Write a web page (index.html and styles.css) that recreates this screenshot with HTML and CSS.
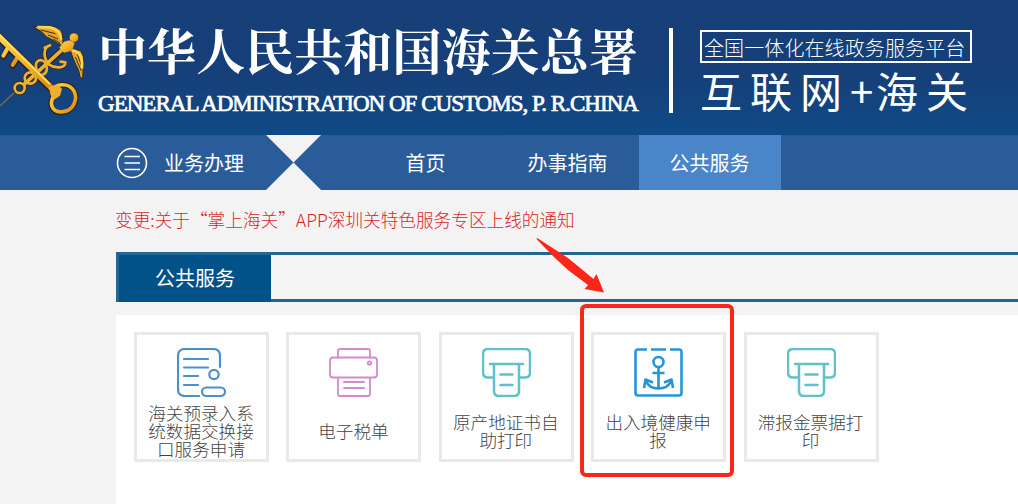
FILE: index.html
```
<!DOCTYPE html>
<html lang="zh-CN">
<head>
    <meta charset="UTF-8">
    <meta name="viewport" content="width=device-width, initial-scale=1.0">
    <title>中华人民共和国海关总署</title>
    <link rel="stylesheet" href="styles.css">
</head>
<body>
    <header class="header">
        <svg class="emblem" viewBox="0 0 300 330">
            <defs>
                <linearGradient id="gold" x1="0" y1="0" x2="1" y2="1">
                    <stop offset="0" stop-color="#ffd34a"/>
                    <stop offset="0.5" stop-color="#f4b52a"/>
                    <stop offset="1" stop-color="#d98a12"/>
                </linearGradient>
            </defs>
            <!-- dark edge under the gold -->
            <g fill="none" stroke="#2b2417" stroke-linecap="round">
                <path d="M-8 62L156 222" stroke-width="25"/>
                <path d="M160 228C166 204 208 202 223 228C235 254 220 288 190 292C158 296 144 272 160 244Z" stroke-width="16"/>
                <path d="M38 152L52 132M10 124L22 106" stroke-width="18"/>
                <path d="M70 208L204 90" stroke-width="18"/>
            </g>
            <path d="M0 273L46 230" fill="none" stroke="#8c6440" stroke-width="4"/>
            <g fill="none" stroke="#3a2a10" stroke-width="13">
                <circle cx="59" cy="219" r="15"/>
                <circle cx="91" cy="189" r="17"/>
                <path d="M110 165C100 134 128 126 138 148M146 148C128 126 130 96 150 91M146 148C166 162 198 160 196 142"/>
            </g>
            <g fill="none" stroke="#eab133" stroke-width="8" stroke-linecap="round">
                <circle cx="59" cy="219" r="15"/>
                <circle cx="91" cy="189" r="17"/>
                <path d="M110 165C100 134 128 126 138 148C144 164 140 176 124 180"/>
                <path d="M146 148C128 126 130 96 150 91M134 98L150 91M146 148C166 162 198 160 196 142M196 142L182 140"/>
                <path d="M72 208L200 92" stroke-width="11"/>
            </g>
            <!-- wings -->
            <g fill="#e0a32c" stroke="#33280f" stroke-width="3">
                <path d="M100 35L150 33C176 36 188 48 187 62L190 94L172 84L156 74L140 66L124 50Z"/>
                <path d="M210 104L240 106C250 118 252 128 250 150L248 192L240 186L236 166L228 150L220 132Z"/>
            </g>
            <path d="M122 45L166 56M144 60L174 72M160 72L180 84M226 126L244 168M232 118L247 158M240 118L247 140" stroke="#3c341f" stroke-width="3"/>
            <path d="M112 36L150 37C172 42 181 54 184 74M216 106C242 110 248 128 246 160" fill="none" stroke="#ffd251" stroke-width="8"/>
            <circle cx="222" cy="68" r="14" fill="url(#gold)" stroke="#33280f" stroke-width="2"/>
            <path d="M208 76L224 84L216 107L192 113L178 98L192 80Z" fill="url(#gold)"/>
            <!-- key -->
            <g fill="none" stroke="url(#gold)" stroke-linecap="round">
                <path d="M38 150L52 128M10 122L22 101" stroke-width="12"/>
                <path d="M-8 60L156 220" stroke-width="18"/>
                <path d="M158 228C166 204 206 202 222 228C234 254 220 286 190 290C160 294 146 272 160 244Z" stroke-width="11"/>
            </g>
            <path d="M146 216L172 208L186 222L180 242L162 254L152 240Z" fill="#edaf2c"/>
            <path d="M-2 60L150 208" stroke="#ffe06a" stroke-width="5"/>
        </svg>
        <div class="org">
            <div class="org-cn">中华人民共和国海关总署</div>
            <div class="org-en">GENERAL ADMINISTRATION OF CUSTOMS, P. R.CHINA</div>
        </div>
        <div class="line"></div>
        <div class="platform">
            <div class="platform-box">全国一体化在线政务服务平台</div>
            <div class="platform-name">互联网<span>+</span>海关</div>
        </div>
    </header>

    <nav class="nav">
        <div class="business">
            <svg class="menu-icon" viewBox="0 0 32 32">
                <circle cx="16" cy="16" r="14.5"/>
                <path d="M8.5 9.500H24M8.500 16H24M8.500 22.500H24"/>
            </svg>
            业务办理
        </div>
        <svg class="hourglass" viewBox="0 0 55 55">
            <path d="M0 0H55L0 55H55Z"/>
        </svg>
        <div class="menu">
            <a class="menu-item">首页</a>
            <a class="menu-item">办事指南</a>
            <a class="menu-item active">公共服务</a>
        </div>
    </nav>

    <main class="main">
        <p class="notice">变更:关于“掌上海关”APP深圳关特色服务专区上线的通知</p>
        <div class="title-bar">
            <h2 class="title">公共服务</h2>
        </div>
        <div class="panel">
            <div class="card">
                <svg class="icon blue" viewBox="0 0 49 49">
                    <path d="M22 48H8Q1 48 1 41V8Q1 1 8 1H36Q43 1 43 8V19M7 11H31M7 19.500H31M7 28H21M7 37H21"/>
                    <circle cx="37" cy="26.500" r="4.700"/>
                    <rect x="25" y="39.500" width="23" height="8.500" rx="4.250"/>
                </svg>
                <div class="label">海关预录入系统数据交换接口服务申请</div>
            </div>
            <div class="card">
                <svg class="icon pink" viewBox="0 0 49 49">
                    <path d="M9 10V3Q9 1 11 1H39Q41 1 41 3V10M9 29.500H4Q1 29.500 1 26.500V12.500Q1 9.500 4 9.500H45Q48 9.500 48 12.500V26.500Q48 29.500 45 29.500H41M9 29.500H41V46Q41 48 39 48H11Q9 48 9 46ZM15 34H35M15 40H35"/>
                    <circle cx="40.500" cy="15" r="1.700"/>
                </svg>
                <div class="label">电子税单</div>
            </div>
            <div class="card">
                <svg class="icon teal" viewBox="0 0 49 49">
                    <path d="M12 29.500H6Q1 29.500 1 24.500V6Q1 1 6 1H43Q48 1 48 6V24.500Q48 29.500 43 29.500H37M8 16H41M12 16V43Q12 48 17 48H32Q37 48 37 43V16M18.500 26.500H30.500M18.500 37H30.500"/>
                </svg>
                <div class="label">原产地证书自助打印</div>
            </div>
            <div class="card">
                <svg class="icon sky" viewBox="0 0 49 49">
                    <path d="M13 1.500H4Q1.500 1.500 1.500 4V45Q1.500 47.500 4 47.500H45Q47.500 47.500 47.500 45V4Q47.500 1.500 45 1.500H36M17 1.500H32"/>
                    <circle cx="24.500" cy="14" r="5"/>
                    <path d="M24.500 19V40M18.500 25H30.500M10 40L11.500 31.500L19 34.500M39 40L37.500 31.500L30 34.500M12 33C14 38 19 40.500 24.500 40.500S35 38 37 33"/>
                </svg>
                <div class="label">出入境健康申报</div>
                <div class="mark"></div>
                <svg class="arrow" viewBox="0 0 70 58">
                    <path d="M0.500 1Q0.500 0 2 0.500L32 20L57.500 41L60.500 36L68 54.500L48.500 51L52 47L32 32L18 19Z"/>
                </svg>
            </div>
            <div class="card">
                <svg class="icon teal" viewBox="0 0 49 49">
                    <path d="M12 29.500H6Q1 29.500 1 24.500V6Q1 1 6 1H43Q48 1 48 6V24.500Q48 29.500 43 29.500H37M8 16H41M12 16V43Q12 48 17 48H32Q37 48 37 43V16M18.500 26.500H30.500M18.500 37H30.500"/>
                </svg>
                <div class="label">滞报金票据打印</div>
            </div>
        </div>
    </main>
</body>
</html>
```
FILE: styles.css
```
* {
    box-sizing: border-box;
}

html, body {
    margin: 0;
    padding: 0;
    height: 100%;
    overflow: hidden;
}

body {
    display: flex;
    flex-direction: column;
    background: #f3f3f3;
    font-family: "Noto Sans CJK SC", sans-serif;
}

.header {
    display: flex;
    flex: none;
    height: 135px;
    background: linear-gradient(#173e77, #16407a 60%, #0e4a87);
    color: #fff;
    white-space: nowrap;
}

.emblem {
    flex: none;
    width: 100px;
    height: 110px;
    margin-top: 15px;
}

.org {
    flex: none;
    width: 569px;
    padding-top: 19px;
}

.org-cn {
    margin-left: -2px;
    font-family: "Noto Serif CJK SC", "Noto Sans CJK SC", serif;
    font-size: 49px;
    font-weight: 700;
    line-height: 60px;
    letter-spacing: 0.1px;
}

.org-en {
    margin: 11px 0 0 -2px;
    font-family: "Liberation Serif", serif;
    font-size: 23px;
    line-height: 28px;
    letter-spacing: -0.98px;
    -webkit-text-stroke: 0.7px #fff;
}

.line {
    flex: none;
    width: 4px;
    height: 85px;
    margin-top: 28px;
    background: #fff;
}

.platform {
    margin: 30px 0 0 27px;
}

.platform-box {
    width: 272px;
    height: 33px;
    padding-left: 2px;
    border: 2px solid #fff;
    font-size: 20px;
    font-weight: 300;
    line-height: 31px;
    letter-spacing: 0.1px;
}

.platform-name {
    display: flex;
    font-size: 42px;
    line-height: 53px;
    letter-spacing: 8px;
}

.platform-name span {
    width: 26px;
    letter-spacing: 0;
}

.nav {
    display: flex;
    flex: none;
    height: 55px;
    background: #2b5c9a;
    color: #fff;
    font-size: 20px;
}

.business {
    display: flex;
    align-items: center;
    width: 266px;
    padding-left: 116px;
}

.menu-icon {
    width: 32px;
    height: 32px;
    margin-right: 16px;
    fill: none;
    stroke: #fff;
    stroke-width: 1.6;
}

.hourglass {
    width: 55px;
    height: 55px;
    fill: #f3f3f3;
}

.menu {
    display: flex;
    margin-left: 34px;
}

.menu-item {
    width: 142px;
    padding-right: 1px;
    line-height: 56px;
    text-align: center;
}

.active {
    background: #4985c8;
}

.main {
    display: flex;
    flex: 1;
    flex-direction: column;
    padding-left: 116px;
}

.notice {
    height: 62px;
    margin: 0 0 0 -1px;
    color: #dc1f28;
    font-size: 17.65px;
    font-weight: 300;
    line-height: 60px;
}

.title-bar {
    height: 50px;
    border: solid #24668f;
    border-width: 3px 0 3px 3px;
    background: #f5f5f5;
}

.title {
    width: 152px;
    height: 47px;
    margin: 0;
    background: #005288;
    color: #fff;
    font-size: 20px;
    font-weight: 400;
    line-height: 46px;
    text-align: center;
}

.panel {
    display: flex;
    flex: 1;
    gap: 17.4px;
    margin-top: 13px;
    padding: 17px 0 0 18px;
    background: #fff;
}

.card {
    position: relative;
    display: flex;
    flex: none;
    flex-direction: column;
    align-items: center;
    width: 135px;
    height: 130px;
    padding-top: 13px;
    border: 3px solid #e9e9e9;
}

.icon {
    flex: none;
    width: 49px;
    height: 49px;
    fill: none;
    stroke-width: 2.2;
    stroke-linecap: round;
    stroke-linejoin: round;
}

.blue { stroke: #4b8fcd; }
.pink { stroke: #d48acd; stroke-width: 1.8; }
.teal { stroke: #62c0ca; stroke-width: 2.5; }
.sky { stroke: #2695d8; stroke-width: 2.6; stroke-linecap: butt; }

.label {
    display: flex;
    align-items: center;
    justify-content: center;
    width: 107px;
    height: 54px;
    margin: 7px 1px 0 0;
    color: #444;
    font-size: 17.6px;
    font-weight: 300;
    line-height: 18px;
    text-align: center;
}

/* red frame and arrow over the highlighted service */
.mark {
    position: absolute;
    top: -31px;
    left: -14px;
    width: 154px;
    height: 173px;
    border: 4px solid #fa2718;
    border-radius: 6px;
}

.arrow {
    position: absolute;
    top: -97px;
    left: -58px;
    width: 70px;
    height: 58px;
    fill: #fa2718;
}
```
